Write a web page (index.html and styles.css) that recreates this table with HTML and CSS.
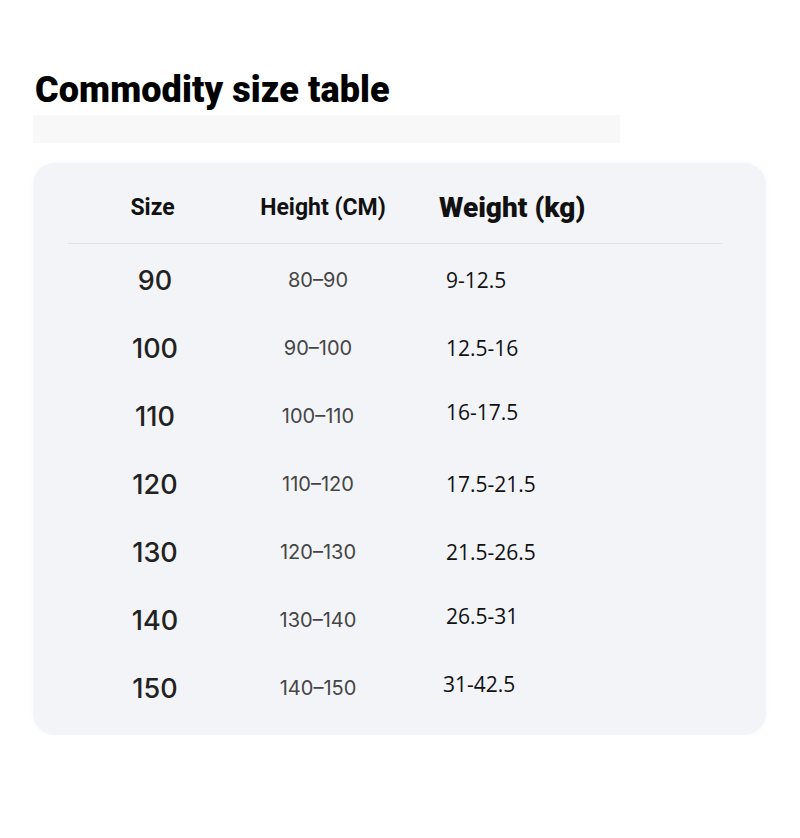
FILE: index.html
```html
<!DOCTYPE html>
<html lang="en">
<head>
<meta charset="utf-8">
<title>Commodity size table</title>
<link rel="stylesheet" href="styles.css">
</head>
<body>
<div class="page">
  <h1 class="title">Commodity size table</h1>
  <div class="ghost-bar"></div>
  <div class="card">
    <div class="row head">
      <div class="c-size">Size</div>
      <div class="c-height">Height (CM)</div>
      <div class="c-weight">Weight (kg)</div>
    </div>
    <div class="divider"></div>
    <div class="row"><div class="c-size">90</div><div class="c-height">80–90</div><div class="c-weight">9-12.5</div></div>
    <div class="row"><div class="c-size">100</div><div class="c-height">90–100</div><div class="c-weight">12.5-16</div></div>
    <div class="row"><div class="c-size">110</div><div class="c-height">100–110</div><div class="c-weight up">16-17.5</div></div>
    <div class="row"><div class="c-size">120</div><div class="c-height">110–120</div><div class="c-weight">17.5-21.5</div></div>
    <div class="row"><div class="c-size">130</div><div class="c-height">120–130</div><div class="c-weight">21.5-26.5</div></div>
    <div class="row"><div class="c-size">140</div><div class="c-height">130–140</div><div class="c-weight up">26.5-31</div></div>
    <div class="row"><div class="c-size">150</div><div class="c-height">140–150</div><div class="c-weight up left">31-42.5</div></div>
  </div>
</div>
</body>
</html>
```

FILE: styles.css
```css
* { box-sizing: border-box; }
html, body { margin: 0; padding: 0; background: #ffffff; }
.page { padding-top: 68px; }
.title {
  margin: 0 0 0 35px;
  font-family: Roboto, "Liberation Sans", sans-serif;
  font-weight: 900;
  font-size: 36px;
  line-height: 44px;
  color: #000;
  letter-spacing: 0.1px;
}
.ghost-bar {
  margin: 3px 0 0 33px;
  width: 587px;
  height: 28px;
  background: #f8f8f8;
}
.card {
  margin: 20px 0 0 33px;
  width: 733px;
  height: 572px;
  background: #f3f4f8;
  border-radius: 22px;
  box-shadow: 0 0 6px rgba(0,0,0,0.03);
}
.row {
  display: grid;
  grid-template-columns: 120px 140px 1fr;
  column-gap: 33px;
  padding-left: 62px;
  height: 68px;
  align-items: center;
}
.row.head { height: 80px; padding-top: 8px; }
.divider {
  margin: 0 0 2px 35px;
  width: 654px;
  height: 1px;
  background: #e2e3e7;
}
.c-size {
  text-align: center;
  font-family: Inter, Roboto, sans-serif;
  font-weight: 500;
  font-size: 27px;
  color: #222;
}
.c-height {
  text-align: center;
  font-family: Inter, Roboto, sans-serif;
  font-weight: 400;
  font-size: 20px;
  color: #454545;
}
.c-weight {
  padding-left: 25px;
  font-family: "Open Sans", "Noto Sans", sans-serif;
  font-size: 21px;
  color: #111;
}
.c-weight.up { margin-bottom: 8px; }
.c-weight.left { padding-left: 22px; }
.head .c-size, .head .c-height, .head .c-weight {
  font-family: Roboto, "Liberation Sans", sans-serif;
  font-weight: 700;
  color: #111;
}
.head .c-size { font-size: 23px; margin-left: -5px; }
.head .c-height { font-size: 23px; padding-left: 10px; }
.head .c-weight { font-size: 28px; padding-left: 18px; font-weight: 900; letter-spacing: 0; }
```
